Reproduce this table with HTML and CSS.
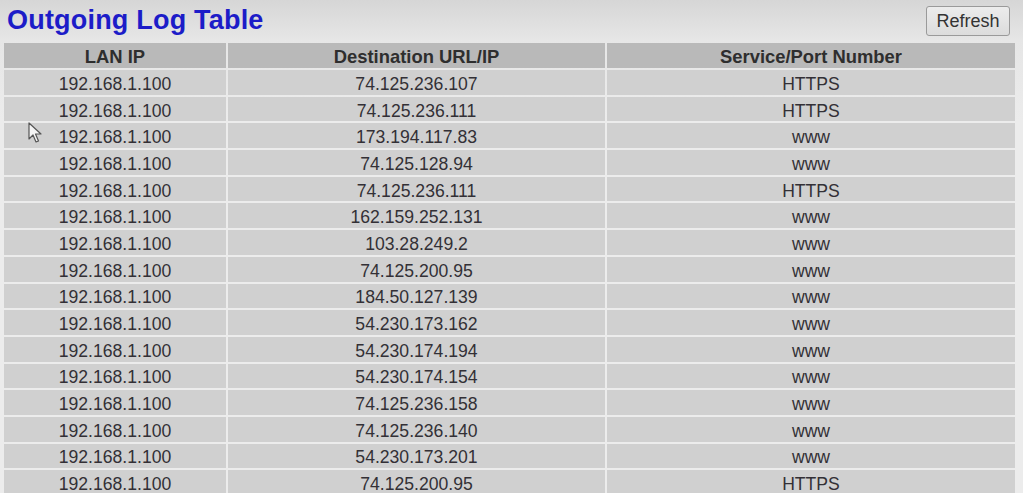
FILE: index.html
```html
<!DOCTYPE html>
<html>
<head>
<meta charset="utf-8">
<link rel="stylesheet" href="styles.css">
</head>
<body>
<div class="page">
  <div class="topbar">
    <h1 class="title">Outgoing Log Table</h1>
    <button class="refresh">Refresh</button>
  </div>
  <table class="log">
    <colgroup>
      <col class="c1"><col class="c2"><col class="c3">
    </colgroup>
    <thead>
      <tr><th>LAN IP</th><th>Destination URL/IP</th><th>Service/Port Number</th></tr>
    </thead>
    <tbody>
      <tr><td>192.168.1.100</td><td>74.125.236.107</td><td>HTTPS</td></tr>
      <tr><td>192.168.1.100</td><td>74.125.236.111</td><td>HTTPS</td></tr>
      <tr><td>192.168.1.100</td><td>173.194.117.83</td><td>www</td></tr>
      <tr><td>192.168.1.100</td><td>74.125.128.94</td><td>www</td></tr>
      <tr><td>192.168.1.100</td><td>74.125.236.111</td><td>HTTPS</td></tr>
      <tr><td>192.168.1.100</td><td>162.159.252.131</td><td>www</td></tr>
      <tr><td>192.168.1.100</td><td>103.28.249.2</td><td>www</td></tr>
      <tr><td>192.168.1.100</td><td>74.125.200.95</td><td>www</td></tr>
      <tr><td>192.168.1.100</td><td>184.50.127.139</td><td>www</td></tr>
      <tr><td>192.168.1.100</td><td>54.230.173.162</td><td>www</td></tr>
      <tr><td>192.168.1.100</td><td>54.230.174.194</td><td>www</td></tr>
      <tr><td>192.168.1.100</td><td>54.230.174.154</td><td>www</td></tr>
      <tr><td>192.168.1.100</td><td>74.125.236.158</td><td>www</td></tr>
      <tr><td>192.168.1.100</td><td>74.125.236.140</td><td>www</td></tr>
      <tr><td>192.168.1.100</td><td>54.230.173.201</td><td>www</td></tr>
      <tr><td>192.168.1.100</td><td>74.125.200.95</td><td>HTTPS</td></tr>
    </tbody>
  </table>
  <svg class="cursor" width="14" height="22" viewBox="0 0 14 22">
    <path d="M1 1 L1 17 L5 13 L8 20 L10.5 19 L7.5 12 L13 12 Z" fill="#f4f4f4" stroke="#555" stroke-width="1.2" stroke-linejoin="round"/>
  </svg>
</div>
</body>
</html>
```
FILE: styles.css
```css
html, body {
  margin: 0;
  padding: 0;
}
body {
  background: #ebebeb;
  font-family: "Liberation Sans", Arial, sans-serif;
  width: 1023px;
  height: 493px;
  overflow: hidden;
}
.page {
  position: relative;
  padding: 0 0 0 2px;
  background: linear-gradient(to bottom, #d6d6d6 0px, #e6e6e6 40px, #ececec 120px, #ececec 100%);
  height: 493px;
}
.topbar {
  display: flex;
  justify-content: space-between;
  align-items: flex-start;
  height: 41px;
  padding-right: 13px;
}
.title {
  margin: 4px 0 0 5px;
  font-size: 27px;
  font-weight: bold;
  color: #1c1cc8;
  line-height: 32px;
  letter-spacing: 0.2px;
}
.refresh {
  margin-top: 6px;
  height: 30px;
  width: 84px;
  padding: 0;
  font-family: "Liberation Sans", Arial, sans-serif;
  font-size: 18px;
  color: #333;
  background: linear-gradient(to bottom, #ececec, #dcdcdc);
  border: 1px solid #9a9a9a;
  border-radius: 3px;
}
.log {
  border-collapse: separate;
  border-spacing: 2px;
  table-layout: fixed;
  width: 1015px;
  margin-top: 0;
  font-size: 17.6px;
  color: #333036;
}
.c1 { width: 222px; }
.c2 { width: 377px; }
.c3 { width: 408px; }
.log th {
  background: #b9b9b9;
  font-weight: bold;
  font-size: 18.4px;
  height: 25px;
  padding: 2px 0 0;
  box-sizing: border-box;
  text-align: center;
  color: #2e2e2e;
  line-height: 20px;
}
.log td {
  background: #d0d0d0;
  height: 24.7px;
  padding: 3px 0 0;
  box-sizing: border-box;
  text-align: center;
  line-height: 20px;
}
.cursor {
  position: absolute;
  left: 28px;
  top: 122px;
}
```
